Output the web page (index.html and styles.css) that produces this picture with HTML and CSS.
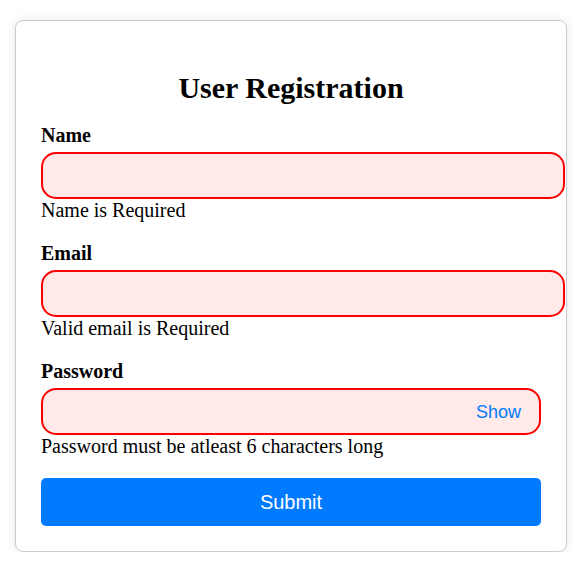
FILE: index.html
```html
<!DOCTYPE html>
<html lang="en">
<head>
<meta charset="utf-8">
<title>User Registration</title>
<link rel="stylesheet" href="styles.css">
</head>
<body>
<div class="card">
  <h2 class="title">User Registration</h2>
  <form class="form">
    <div class="group">
      <label class="label" for="name">Name</label>
      <input class="input input-wide" id="name" type="text">
      <div class="error">Name is Required</div>
    </div>
    <div class="group">
      <label class="label" for="email">Email</label>
      <input class="input input-wide" id="email" type="email">
      <div class="error">Valid email is Required</div>
    </div>
    <div class="group">
      <label class="label" for="password">Password</label>
      <div class="pw-wrap">
        <input class="input input-pw" id="password" type="password">
        <button type="button" class="show">Show</button>
      </div>
      <div class="error">Password must be atleast 6 characters long</div>
    </div>
    <button type="submit" class="submit">Submit</button>
  </form>
</div>
</body>
</html>
```

FILE: styles.css
```css
html, body {
  margin: 0;
  padding: 0;
  background: #ffffff;
}
body {
  font-family: "Liberation Serif", "Times New Roman", serif;
  font-size: 20px;
  color: #000;
  padding-top: 20px;
}
.card {
  width: 500px;
  margin: 0 auto;
  padding: 25px;
  border: 1px solid #cccccc;
  border-radius: 8px;
  box-shadow: 0 0 10px rgba(0, 0, 0, 0.1);
  background: #fff;
}
.title {
  font-size: 1.5em;
  font-weight: bold;
  text-align: center;
  margin: 25px 0 19px;
}
.form {
  margin: 0;
}
.group {
  margin-bottom: 20px;
}
.label {
  display: block;
  font-weight: bold;
  margin-bottom: 5px;
}
.input {
  display: block;
  height: 23px;
  padding: 10px 10px;
  border: 2px solid #ff0000;
  border-radius: 15px;
  background: #ffe9e9;
  font-family: "Liberation Sans", Arial, sans-serif;
  font-size: 18px;
  outline: none;
  margin: 0;
}
.input-wide {
  width: 100%;
  box-sizing: content-box;
}
.pw-wrap {
  position: relative;
}
.input-pw {
  width: 100%;
  box-sizing: border-box;
  height: 47px;
}
.show {
  position: absolute;
  right: 20px;
  top: 50%;
  transform: translateY(-50%);
  background: none;
  border: none;
  padding: 0;
  color: #007bff;
  font-family: "Liberation Sans", Arial, sans-serif;
  font-size: 18px;
  cursor: pointer;
}
.error {
  margin-top: 0;
}
.submit {
  display: block;
  width: 100%;
  height: 48px;
  border: none;
  border-radius: 5px;
  background: #007bff;
  color: #fff;
  font-family: "Liberation Sans", Arial, sans-serif;
  font-size: 20px;
  cursor: pointer;
  margin-top: 0;
}
```
